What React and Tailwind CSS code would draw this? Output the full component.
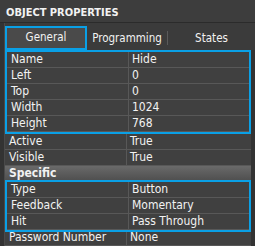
import React from 'react';

const groupA = [
  ['Name', 'Hide'],
  ['Left', '0'],
  ['Top', '0'],
  ['Width', '1024'],
  ['Height', '768'],
];

const groupB = [
  ['Type', 'Button'],
  ['Feedback', 'Momentary'],
  ['Hit', 'Pass Through'],
];

const Row = ({ label, value }) => (
  <div className="flex h-[16px] border-b border-[#585858] leading-[15px]">
    <div className="w-[122px] pl-[4px] border-r border-[#585858] whitespace-nowrap overflow-hidden">{label}</div>
    <div className="flex-1 pl-[3px] whitespace-nowrap overflow-hidden">{value}</div>
  </div>
);

const App = () => {
  return (
    <div
      className="w-[255px] h-[246px] overflow-hidden bg-[#3b3b3b] text-[#f2f2f2] text-[12px]"
      style={{ fontFamily: '"DejaVu Sans Condensed", "DejaVu Sans", sans-serif' }}
    >
      {/* Title */}
      <div className="h-[23px] pt-[5px] px-[6px] flex items-center font-bold text-[11px] bg-[#3d3d3d] border-b border-[#2b2b2b]">
        OBJECT PROPERTIES
      </div>

      <div className="flex">
        <div className="w-[5px] bg-[#333333] border-r border-[#4a4a4a]" />
        <div className="flex-1">
          {/* Tabs */}
          <div className="flex h-[27px] pt-[3px] items-stretch text-[11.5px]">
            <div className="w-[82px] flex items-center justify-center border-2 border-[#0aa0e6] bg-[#4a4a4a]">
              General
            </div>
            <div className="w-[80px] pt-[2px] flex items-center justify-center">
              Programming
            </div>
            <div className="w-px my-[5px] bg-[#5a5a5a]" />
            <div className="flex-1 pt-[2px] flex items-center justify-center">States</div>
          </div>

          {/* Grid */}
          <div className="bg-[#404040] border-r-[4px] border-[#333333]">
            <div className="border-2 border-[#0aa0e6]">
              {groupA.map(([l, v]) => (
                <Row key={l} label={l} value={v} />
              ))}
            </div>
            <Row label="Active" value="True" />
            <Row label="Visible" value="True" />
            <div className="h-[16px] pl-[4px] font-bold leading-[15px] bg-gradient-to-b from-[#6a6a6a] to-[#4e4e4e] border-b border-[#585858]">
              Specific
            </div>
            <div className="relative -mt-[2px] -mb-[2px] border-2 border-[#0aa0e6]">
              {groupB.map(([l, v]) => (
                <Row key={l} label={l} value={v} />
              ))}
            </div>
            <Row label="Password Number" value="None" />
          </div>
        </div>
      </div>
    </div>
  );
};

export default App;
